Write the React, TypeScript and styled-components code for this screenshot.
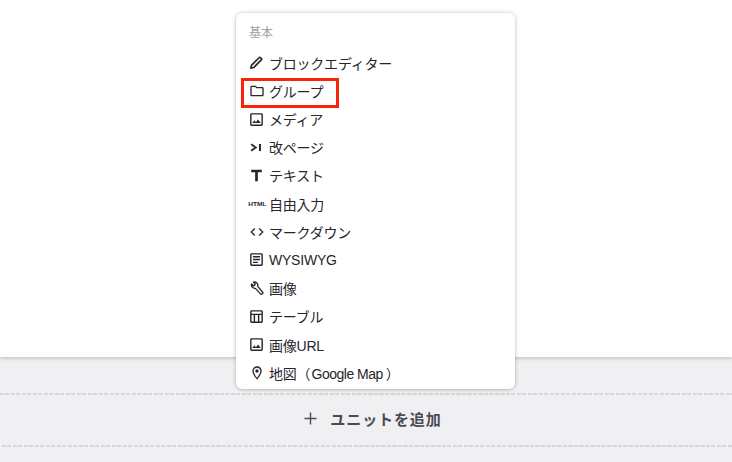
import React from "react";
import styled, { createGlobalStyle } from "styled-components";

const Global = createGlobalStyle`
  html, body { margin: 0; padding: 0; background: #fff; }
  body { font-family: "Liberation Sans", "Noto Sans CJK JP", sans-serif; }
  * { box-sizing: border-box; }
`;

const Page = styled.div`
  position: relative;
  width: 732px;
  height: 462px;
  overflow: hidden;
  display: flex;
  flex-direction: column;
`;
const Canvas = styled.div`
  height: 357px;
  background: #fff;
  box-shadow: 0 1px 4px rgba(40, 40, 50, 0.28);
  position: relative;
`;
const Footer = styled.div`
  flex: 1;
  background: #f0f0f3;
  padding-top: 36px;
`;
const AddUnit = styled.button`
  display: flex;
  align-items: center;
  justify-content: center;
  gap: 13px;
  width: 100%;
  height: 54px;
  padding: 0 0 3px 14px;
  border: 0;
  background-color: transparent;
  background-image:
    repeating-linear-gradient(90deg, #d6d6da 0 4px, transparent 4px 5.5px),
    repeating-linear-gradient(90deg, #d6d6da 0 4px, transparent 4px 5.5px);
  background-size: 100% 2px, 100% 2px;
  background-position: 0 0, 2px 100%;
  background-repeat: no-repeat;
  color: #4b4b55;
  font-family: inherit;
  font-size: 15px;
  font-weight: 700;
  letter-spacing: 0.9px;
`;
const Menu = styled.div`
  position: absolute;
  left: 236px;
  top: 13px;
  width: 279px;
  height: 376px;
  background: #fff;
  border-radius: 6px;
  box-shadow: 0 0 4px rgba(30, 30, 40, 0.22), 0 1px 3px rgba(30, 30, 40, 0.12);
  padding-top: 12px;
`;
const Heading = styled.div`
  height: 24px;
  padding-left: 13px;
  font-size: 12px;
  line-height: 16px;
  color: #a0a0a5;
`;
const List = styled.ul`
  list-style: none;
  margin: -0.3px 0 0;
  padding: 0;
`;
const Row = styled.li`
  display: flex;
  align-items: center;
  height: 28.18px;
  padding-left: 12px;
  font-size: 14px;
  letter-spacing: -0.22px;
  color: #26262c;
  white-space: nowrap;
`;
const IconBox = styled.span`
  display: flex;
  align-items: center;
  justify-content: center;
  width: 17px;
  height: 17px;
  margin-right: 4px;
  color: #26262c;
`;
const HtmlMark = styled.span`
  font-size: 6px;
  font-weight: 700;
  letter-spacing: 0;
  transform: translateX(1px) scaleX(1.1);
`;
const OpenParen = styled.span`
  letter-spacing: 1px;
`;
const Latin = styled.span`
  letter-spacing: -0.5px;
  padding-right: 3px;
`;
const Highlight = styled.div`
  position: absolute;
  left: 241px;
  top: 78px;
  width: 98px;
  height: 30px;
  border: 3px solid #f5240b;
`;

const Svg: React.FC<{ children: React.ReactNode; size?: number }> = ({ children, size = 17 }) => (
  <svg width={size} height={size} viewBox="0 0 24 24" fill="currentColor">{children}</svg>
);

const Pencil = () => (
  <Svg>
    <path
      d="M4 20l.9-4L15.6 5.3a1.5 1.5 0 0 1 2.1 0l1 1a1.5 1.5 0 0 1 0 2.1L8 19.1 4 20z"
      fill="none"
      stroke="currentColor"
      strokeWidth="2.4"
      strokeLinejoin="round"
    />
  </Svg>
);
const Folder = () => (
  <Svg size={16}><path d="M9.17 6l2 2H20v10H4V6h5.17M10 4H4c-1.1 0-2 .9-2 2v12c0 1.1.9 2 2 2h16c1.1 0 2-.9 2-2V8c0-1.1-.9-2-2-2h-8l-2-2z" /></Svg>
);
const ImageIcon = () => (
  <Svg><path d="M19 5v14H5V5h14m0-2H5c-1.1 0-2 .9-2 2v14c0 1.1.9 2 2 2h14c1.1 0 2-.9 2-2V5c0-1.1-.9-2-2-2zm-4.86 8.86l-3 3.87L9 13.14 6 17h12l-3.86-5.14z" /></Svg>
);
const PageBreak = () => (
  <Svg>
    <path d="M4.5 7.5l6.5 4.5-6.5 4.5" fill="none" stroke="currentColor" strokeWidth="2.6" />
    <rect x="15.5" y="7" width="2.8" height="10" />
  </Svg>
);
const TextIcon = () => (
  <Svg><path d="M4.5 4h15v3.4h-5.6V20h-3.8V7.4H4.5z" /></Svg>
);
const Code = () => (
  <Svg size={16}><path d="M9.4 16.6L4.8 12l4.6-4.6L8 6l-6 6 6 6 1.4-1.4zm5.2 0l4.6-4.6-4.6-4.6L16 6l6 6-6 6-1.4-1.4z" /></Svg>
);
const Article = () => (
  <Svg><path d="M19 5v14H5V5h14m0-2H5c-1.1 0-2 .9-2 2v14c0 1.1.9 2 2 2h14c1.1 0 2-.9 2-2V5c0-1.1-.9-2-2-2zM7 7h10v2H7zm0 4h10v2H7zm0 4h7v2H7z" /></Svg>
);
const Wrench = () => (
  <Svg size={16}>
    <path
      d="M13.2 8.6a5 5 0 0 0-6.6-5.4l3 3-2.6 2.8-3-3a5 5 0 0 0 5.5 6.5l8.2 8.7c.5.5 1.2.5 1.7 0l1.1-1.1c.5-.5.5-1.2 0-1.7l-7.3-8.8z"
      fill="none"
      stroke="currentColor"
      strokeWidth="2"
      strokeLinejoin="round"
    />
  </Svg>
);
const TableIcon = () => (
  <Svg><path d="M19 3H5c-1.1 0-2 .9-2 2v14c0 1.1.9 2 2 2h14c1.1 0 2-.9 2-2V5c0-1.1-.9-2-2-2zm0 2v3H5V5h14zm-9 14v-9h4v9h-4zM5 10h3v9H5v-9zm11 9v-9h3v9h-3z" /></Svg>
);
const Pin = () => (
  <Svg size={16}><path d="M12 2C8.13 2 5 5.13 5 9c0 5.25 7 13 7 13s7-7.75 7-13c0-3.87-3.13-7-7-7zm0 17.1C9.9 16.4 7 12 7 9c0-2.76 2.24-5 5-5s5 2.24 5 5c0 3-2.9 7.4-5 10.1zM12 6.5a2.5 2.5 0 1 0 0 5 2.5 2.5 0 0 0 0-5z" /></Svg>
);

const items: { id: string; icon: React.ReactNode; label: React.ReactNode }[] = [
  { id: "block", icon: <Pencil />, label: "ブロックエディター" },
  { id: "group", icon: <Folder />, label: "グループ" },
  { id: "media", icon: <ImageIcon />, label: "メディア" },
  { id: "break", icon: <PageBreak />, label: "改ページ" },
  { id: "text", icon: <TextIcon />, label: "テキスト" },
  { id: "free", icon: <HtmlMark>HTML</HtmlMark>, label: "自由入力" },
  { id: "md", icon: <Code />, label: "マークダウン" },
  { id: "wysiwyg", icon: <Article />, label: "WYSIWYG" },
  { id: "image", icon: <Wrench />, label: "画像" },
  { id: "table", icon: <TableIcon />, label: "テーブル" },
  { id: "imageurl", icon: <ImageIcon />, label: "画像URL" },
  {
    id: "map",
    icon: <Pin />,
    label: (
      <span>
        地図<OpenParen>（</OpenParen><Latin>Google Map</Latin>）
      </span>
    ),
  },
];

export default function App() {
  return (
    <Page>
      <Global />
      <Canvas />
      <Footer>
        <AddUnit>
          <svg width="13" height="13" viewBox="0 0 13 13" stroke="currentColor" strokeWidth="1.4">
            <path d="M6.5 0.5v12M0.5 6.5h12" />
          </svg>
          ユニットを追加
        </AddUnit>
      </Footer>
      <Menu>
        <Heading>基本</Heading>
        <List>
          {items.map((it) => (
            <Row key={it.id}>
              <IconBox>{it.icon}</IconBox>
              {it.label}
            </Row>
          ))}
        </List>
      </Menu>
      <Highlight />
    </Page>
  );
}
